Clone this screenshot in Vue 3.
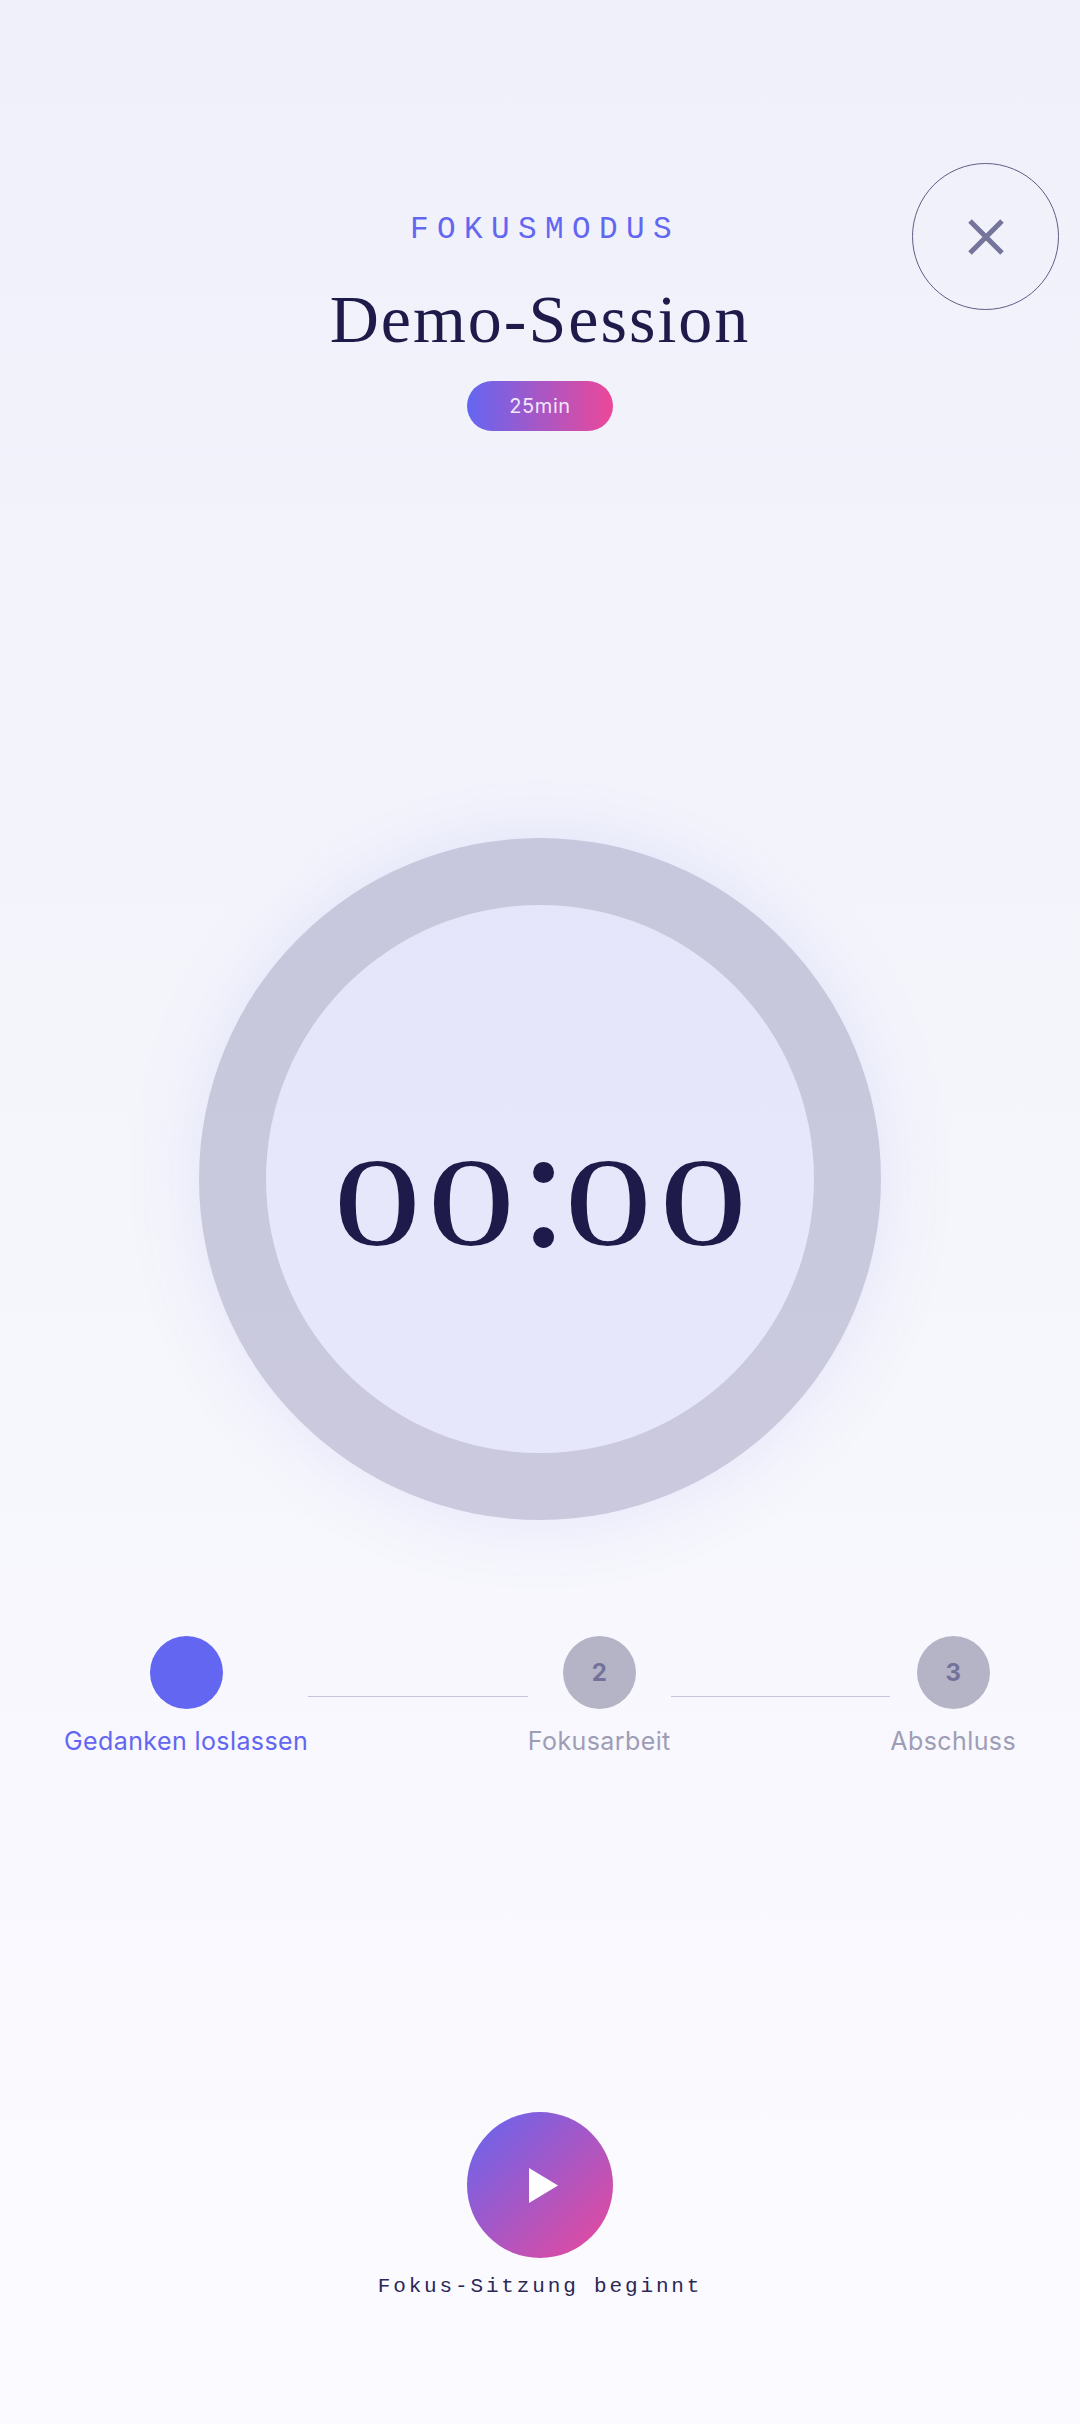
<script setup>
const steps = [
  { n: '', label: 'Gedanken loslassen', active: true },
  { n: '2', label: 'Fokusarbeit', active: false },
  { n: '3', label: 'Abschluss', active: false },
]
</script>

<template>
  <main class="page">
    <button class="close" aria-label="Schließen">
      <svg width="36" height="36" viewBox="0 0 36 36">
        <path d="M2 2 L34 34 M34 2 L2 34" stroke="#75749a" stroke-width="5" fill="none" />
      </svg>
    </button>

    <header class="head">
      <div class="eyebrow">FOKUSMODUS</div>
      <h1 class="title">Demo-Session</h1>
      <div class="pill">25min</div>
    </header>

    <section class="ring">
      <div class="time"><span class="d">0</span><span class="d">0</span><span class="colon">:</span><span class="d">0</span><span class="d">0</span></div>
    </section>

    <section class="steps">
      <template v-for="(s, i) in steps" :key="s.label">
        <div class="step" :class="{ active: s.active }">
          <div class="dot">{{ s.n }}</div>
          <div class="label">{{ s.label }}</div>
        </div>
        <div v-if="i < steps.length - 1" class="line"></div>
      </template>
    </section>

    <footer class="foot">
      <button class="play" aria-label="Start">
        <svg width="29" height="35" viewBox="0 0 29 35"><path d="M0 0 L29 17.5 L0 35 Z" fill="#fff" /></svg>
      </button>
      <div class="hint">Fokus-Sitzung beginnt</div>
    </footer>
  </main>
</template>

<style scoped>
.page {
  position: relative;
  box-sizing: border-box;
  width: 1080px;
  height: 2424px;
  overflow: hidden;
  display: flex;
  flex-direction: column;
  align-items: center;
  background: linear-gradient(180deg, #eff0f9 0%, #f2f3fb 25%, #f5f6fb 50%, #f8f8fe 75%, #fbfbff 100%);
  font-family: Inter, "Noto Sans", sans-serif;
}
.close {
  position: absolute;
  top: 163px;
  left: 912px;
  width: 147px;
  height: 147px;
  padding: 0;
  border: 1px solid #5f5e85;
  border-radius: 50%;
  background: transparent;
  display: flex;
  align-items: center;
  justify-content: center;
}
.head {
  padding-top: 213px;
  display: flex;
  flex-direction: column;
  align-items: center;
}
.eyebrow {
  font-family: "Liberation Mono", monospace;
  font-size: 31px;
  line-height: 34px;
  letter-spacing: 8.4px;
  margin-right: -10px;
  color: #6366f1;
}
.title {
  margin: 33px 0 0;
  font-family: "Liberation Serif", serif;
  font-weight: 400;
  font-size: 68px;
  line-height: 78px;
  letter-spacing: 2px;
  color: #1e1b4b;
}
.pill {
  margin-top: 23px;
  width: 146px;
  height: 50px;
  border-radius: 25px;
  background: linear-gradient(90deg, #6366f1, #ec4899);
  color: #f2e6fc;
  font-size: 20px;
  letter-spacing: 0.6px;
  display: flex;
  align-items: center;
  justify-content: center;
}
.ring {
  box-sizing: border-box;
  margin-top: 407px;
  width: 682px;
  height: 682px;
  border: 67px solid rgba(40, 35, 110, 0.21);
  border-radius: 50%;
  background: rgba(99, 102, 241, 0.1);
  background-clip: padding-box;
  box-shadow: 0 0 80px rgba(99, 102, 241, 0.12);
  display: flex;
  align-items: center;
  justify-content: center;
}
.time {
  display: flex;
  align-items: baseline;
  font-family: "Liberation Serif", serif;
  font-size: 124px;
  line-height: 150px;
  color: #1e1b4b;
  transform: translateY(15px);
}
.d {
  display: inline-block;
  width: 94.6px;
  text-align: center;
  transform: scaleX(1.42);
}
.colon {
  width: 42px;
  text-align: center;
  font-size: 178px;
  line-height: 150px;
}
.steps {
  box-sizing: border-box;
  margin-top: 116px;
  width: 100%;
  padding: 0 64px;
  display: flex;
  align-items: flex-start;
}
.step {
  display: flex;
  flex-direction: column;
  align-items: center;
}
.dot {
  width: 73px;
  height: 73px;
  border-radius: 50%;
  background: #b5b4c6;
  color: #74729a;
  font-size: 24px;
  font-weight: 700;
  display: flex;
  align-items: center;
  justify-content: center;
}
.label {
  margin-top: 14px;
  font-size: 25px;
  line-height: 36px;
  letter-spacing: 0.4px;
  color: #9e9db5;
  white-space: nowrap;
}
.step.active .dot {
  background: #6366f1;
}
.step.active .label {
  color: #6366f1;
}
.line {
  flex: 1;
  height: 1px;
  margin-top: 60px;
  background: #c4c4da;
}
.foot {
  margin-top: 353px;
  display: flex;
  flex-direction: column;
  align-items: center;
}
.play {
  width: 146px;
  height: 146px;
  padding: 0 0 0 7px;
  border: 0;
  border-radius: 50%;
  background: linear-gradient(135deg, #6366f1, #ec4899);
  display: flex;
  align-items: center;
  justify-content: center;
}
.hint {
  margin-top: 15px;
  font-family: "Liberation Mono", monospace;
  font-size: 21px;
  line-height: 28px;
  letter-spacing: 2.85px;
  color: #2b2858;
}
</style>
